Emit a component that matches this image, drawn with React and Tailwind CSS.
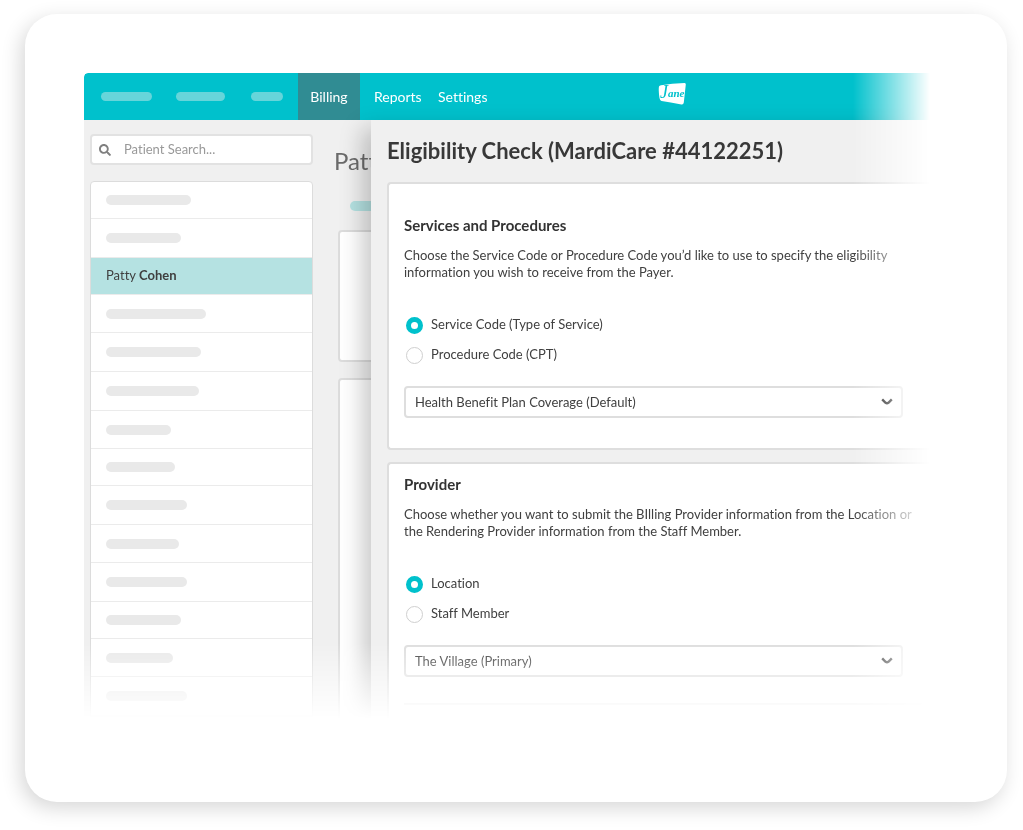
import React, { useState } from "react";
import { FaSearch } from "react-icons/fa";

const PATIENTS = [
  { row: "h-[37px]", bar: "w-[85px]" },
  { row: "h-[39px]", bar: "w-[75px]" },
  { row: "h-[37px]", first: "Patty", last: "Cohen" },
  { row: "h-[38px]", bar: "w-[100px]" },
  { row: "h-[39px]", bar: "w-[95px]" },
  { row: "h-[39px]", bar: "w-[93px]" },
  { row: "h-[38px]", bar: "w-[65px]" },
  { row: "h-[37px]", bar: "w-[69px]" },
  { row: "h-[39px]", bar: "w-[81px]" },
  { row: "h-[38px]", bar: "w-[73px]" },
  { row: "h-[39px]", bar: "w-[81px]" },
  { row: "h-[37px]", bar: "w-[75px]" },
  { row: "h-[38px]", bar: "w-[67px]" },
  { row: "h-[39px]", bar: "w-[81px]" },
];

function Logo() {
  return (
    <svg width="28" height="24" viewBox="0 0 28 24" aria-label="Jane">
      <path d="M3 3.2 Q14 1.2 26.6 1 Q28 1 27.8 2.6 L25.8 20.6 Q25.4 22.8 23.4 22.4 Q12 20.4 3.6 19 Q1.6 18.4 1.2 14 Q.4 7 1 4.6 Q1.4 3.4 3 3.2Z" fill="#fff" />
      <text x="2" y="16" fontStyle="italic" fontFamily="'Liberation Serif', serif" fill="#00c1cc">
        <tspan fontSize="18">J</tspan>
        <tspan fontSize="11" fontWeight="700" y="15">ane</tspan>
      </text>
    </svg>
  );
}

function NavBar() {
  return (
    <nav className="flex h-[47px] items-center rounded-tl bg-[#00c1cc] text-[14px] text-white">
      <div className="ml-[17px] h-[9px] w-[51px] rounded-full bg-[#66d5da]" />
      <div className="ml-6 h-[9px] w-[49px] rounded-full bg-[#66d5da]" />
      <div className="ml-[26px] h-[9px] w-8 rounded-full bg-[#66d5da]" />
      <a href="#billing" className="ml-[15px] flex h-full w-[62px] items-center justify-center bg-[#308c93]">Billing</a>
      <a href="#reports" className="ml-[14px] w-16">Reports</a>
      <a href="#settings" className="w-[220px]">Settings</a>
      <div className="pb-[6px]">
        <Logo />
      </div>
    </nav>
  );
}

function Sidebar() {
  return (
    <aside className="w-[229px] shrink-0 pt-[14px] pl-[6px]">
      <label className="flex h-[31px] items-center rounded border-2 border-[#e2e2e2] bg-white pl-[7px]">
        <FaSearch className="size-3 shrink-0 text-[#808080]" />
        <input
          type="text"
          aria-label="Patient Search"
          placeholder="Patient Search..."
          className="ml-[13px] w-full min-w-0 bg-transparent text-[13px] outline-none placeholder:text-[#999]"
        />
      </label>
      <ul className="mt-4 rounded-t border border-[#dcdcdc] bg-white">
        {PATIENTS.map((p, i) => (
          <li
            key={i}
            className={`${p.row} flex items-center border-b border-[#ebebeb] pl-[15px] text-[13px] text-[#3f3f3f] ${p.last ? "bg-[#b5e2e2]" : ""}`}
          >
            {p.last ? (
              <span>{p.first} <b>{p.last}</b></span>
            ) : (
              <div className={`${p.bar} h-[10px] rounded-full bg-[#e9e9e9]`} />
            )}
          </li>
        ))}
      </ul>
    </aside>
  );
}

// Patient page, mostly hidden behind the eligibility panel
function PatientPage() {
  return (
    <div className="flex w-[58px] shrink-0 flex-col overflow-hidden pl-[21px]">
      <div className="mt-[25px] text-[24px] leading-8 whitespace-nowrap text-[#6b6b6b]">Patt</div>
      <div className="mt-6 ml-4 h-[10px] w-16 rounded-full bg-[#b5e2e2]" />
      <div className="mt-[19px] ml-1 h-[132px] w-64 rounded border-2 border-[#dcdcdc] bg-white" />
      <div className="mt-4 ml-1 w-64 flex-1 rounded-t border-2 border-b-0 border-[#dcdcdc] bg-white" />
    </div>
  );
}

function RadioOption({ name, label, checked, onChange }) {
  return (
    <label className="flex h-[18px] items-center gap-2 text-[13px]">
      <input
        type="radio"
        name={name}
        checked={checked}
        onChange={onChange}
        className="size-[17px] appearance-none rounded-full border border-[#cfcfcf] bg-white checked:border-[5px] checked:border-[#00c1cc]"
      />
      {label}
    </label>
  );
}

function Dropdown({ label, option, tone }) {
  return (
    <div className="relative mr-[27px]">
      <select
        aria-label={label}
        className={`${tone} block h-8 w-full appearance-none rounded border-2 border-[#dedede] bg-white pt-[2px] pl-[9px] text-[13px] outline-none`}
      >
        <option>{option}</option>
      </select>
      <svg className="pointer-events-none absolute top-3 right-[10px]" width="12" height="8" viewBox="0 0 12 8" fill="none" stroke="#000" strokeWidth="2.4">
        <path d="M1.2 1.4 L4.6 4.8 Q6 5.8 7.4 4.8 L10.8 1.4" />
      </svg>
    </div>
  );
}

function Section({ title, text, options, name, children, className }) {
  const [value, setValue] = useState(options[0]);
  return (
    <section className={`${className} border-2 border-r-0 border-[#dedede] bg-white pl-[15px] text-[#404040]`}>
      <h2 className="text-[15px] leading-5 font-bold text-[#333]">{title}</h2>
      <p className="mt-3 mr-2 text-[13px] leading-[17px]">{text}</p>
      <div className="mt-[35px] ml-[2px] flex flex-col gap-3">
        {options.map(o => (
          <RadioOption key={o} name={name} label={o} checked={value === o} onChange={() => setValue(o)} />
        ))}
      </div>
      <div className="mt-[22px]">{children}</div>
    </section>
  );
}

function EligibilityPanel() {
  return (
    <main className="z-10 min-w-0 flex-1 bg-[#f0f0f0] pl-4 shadow-[-8px_8px_22px_rgba(0,0,0,0.22)]">
      <h1 className="pt-[17px] text-[22px] leading-7 font-bold text-[#383838]">Eligibility Check (MardiCare #44122251)</h1>
      <Section
        className="mt-[17px] rounded-l pt-[31px] pb-[30px]"
        name="code"
        title="Services and Procedures"
        text="Choose the Service Code or Procedure Code you’d like to use to specify the eligibility information you wish to receive from the Payer."
        options={["Service Code (Type of Service)", "Procedure Code (CPT)"]}
      >
        <Dropdown label="Service code" option="Health Benefit Plan Coverage (Default)" tone="text-[#404040]" />
      </Section>
      <Section
        className="mt-3 rounded-tl border-b-0 pt-[10px] pb-[14px]"
        name="provider"
        title="Provider"
        text="Choose whether you want to submit the BIlling Provider information from the Location or the Rendering Provider information from the Staff Member."
        options={["Location", "Staff Member"]}
      >
        <Dropdown label="Provider location" option="The Village (Primary)" tone="text-[#404040]" />
        <hr className="mt-[26px] border-t-2 border-[#e8e8e8]" />
      </Section>
    </main>
  );
}

export default function App() {
  return (
    <div className="min-h-screen bg-white pt-[14px] pr-4 pb-[27px] pl-[25px] font-['Lato',sans-serif] [font-variant-ligatures:none]">
      <div className="rounded-[32px] bg-white pt-[59px] pr-[77px] pb-[83px] pl-[59px] shadow-[-4px_6px_20px_rgba(0,0,0,0.16)]">
        <div className="overflow-hidden rounded-tl bg-[#f0f0f0] [mask-composite:intersect] [mask-image:linear-gradient(to_left,transparent,black_77px),linear-gradient(to_top,transparent,black_76px)]">
          <NavBar />
          <div className="flex">
            <Sidebar />
            <PatientPage />
            <EligibilityPanel />
          </div>
        </div>
      </div>
    </div>
  );
}
